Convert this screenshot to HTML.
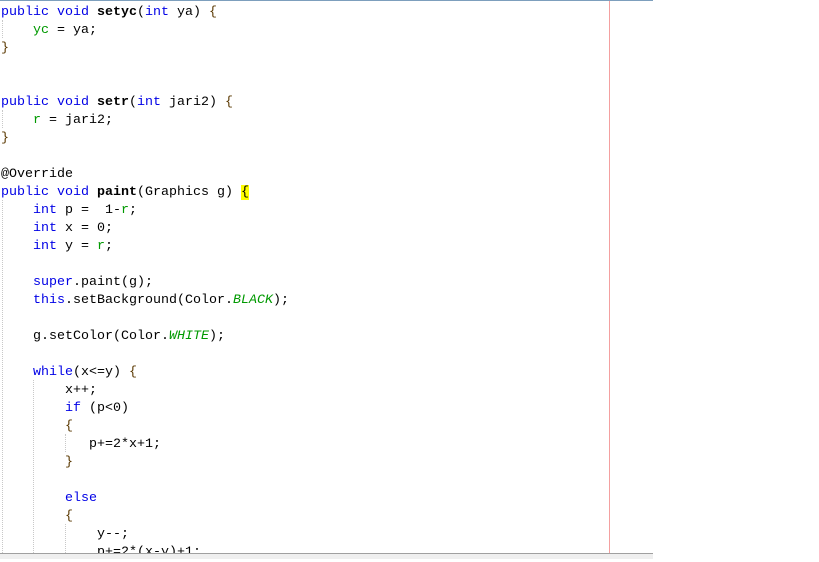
<!DOCTYPE html>
<html><head><style>
body{margin:0;width:819px;height:559px;background:#fff;position:relative;overflow:hidden}
#top{position:absolute;left:0;top:0;width:653px;height:1px;background:#7d9fbd}
#margin{position:absolute;left:609px;top:1px;width:1px;height:553px;background:#f4a0a0}
#bot{position:absolute;left:0;top:553px;width:653px;height:1px;background:#a0a0a0}
#bar{position:absolute;left:0;top:554px;width:653px;height:5px;background:#efefef}
pre{position:absolute;left:1px;top:4px;margin:0;font-family:"Liberation Mono",monospace;font-size:13.33px;line-height:18px;color:#000}
.k{color:#0000e6}.f{color:#009900}.i{color:#009900;font-style:italic}.b{color:#5a3800}
.h{background:#ffff00}
.g{position:absolute;width:0;border-left:1px dotted #c8c8c8}
</style></head><body>
<div id="top"></div><div id="margin"></div>
<div class="g" style="left:2px;top:20px;height:18px"></div>
<div class="g" style="left:2px;top:110px;height:18px"></div>
<div class="g" style="left:2px;top:200px;height:353px"></div>
<div class="g" style="left:33px;top:380px;height:173px"></div>
<div class="g" style="left:65px;top:434px;height:18px"></div>
<div class="g" style="left:65px;top:524px;height:29px"></div>
<pre><span class="k">public</span> <span class="k">void</span> <b>setyc</b>(<span class="k">int</span> ya) <span class="b">{</span>
    <span class="f">yc</span> = ya;
<span class="b">}</span>


<span class="k">public</span> <span class="k">void</span> <b>setr</b>(<span class="k">int</span> jari2) <span class="b">{</span>
    <span class="f">r</span> = jari2;
<span class="b">}</span>

@Override
<span class="k">public</span> <span class="k">void</span> <b>paint</b>(Graphics g) <span class="h">{</span>
    <span class="k">int</span> p =  1-<span class="f">r</span>;
    <span class="k">int</span> x = 0;
    <span class="k">int</span> y = <span class="f">r</span>;

    <span class="k">super</span>.paint(g);
    <span class="k">this</span>.setBackground(Color.<span class="i">BLACK</span>);

    g.setColor(Color.<span class="i">WHITE</span>);

    <span class="k">while</span>(x&lt;=y) <span class="b">{</span>
        x++;
        <span class="k">if</span> (p&lt;0)
        <span class="b">{</span>
           p+=2*x+1;
        <span class="b">}</span>

        <span class="k">else</span>
        <span class="b">{</span>
            y--;
            p+=2*(x-y)+1;
</pre>
<div id="bot"></div><div id="bar"></div>
</body></html>
